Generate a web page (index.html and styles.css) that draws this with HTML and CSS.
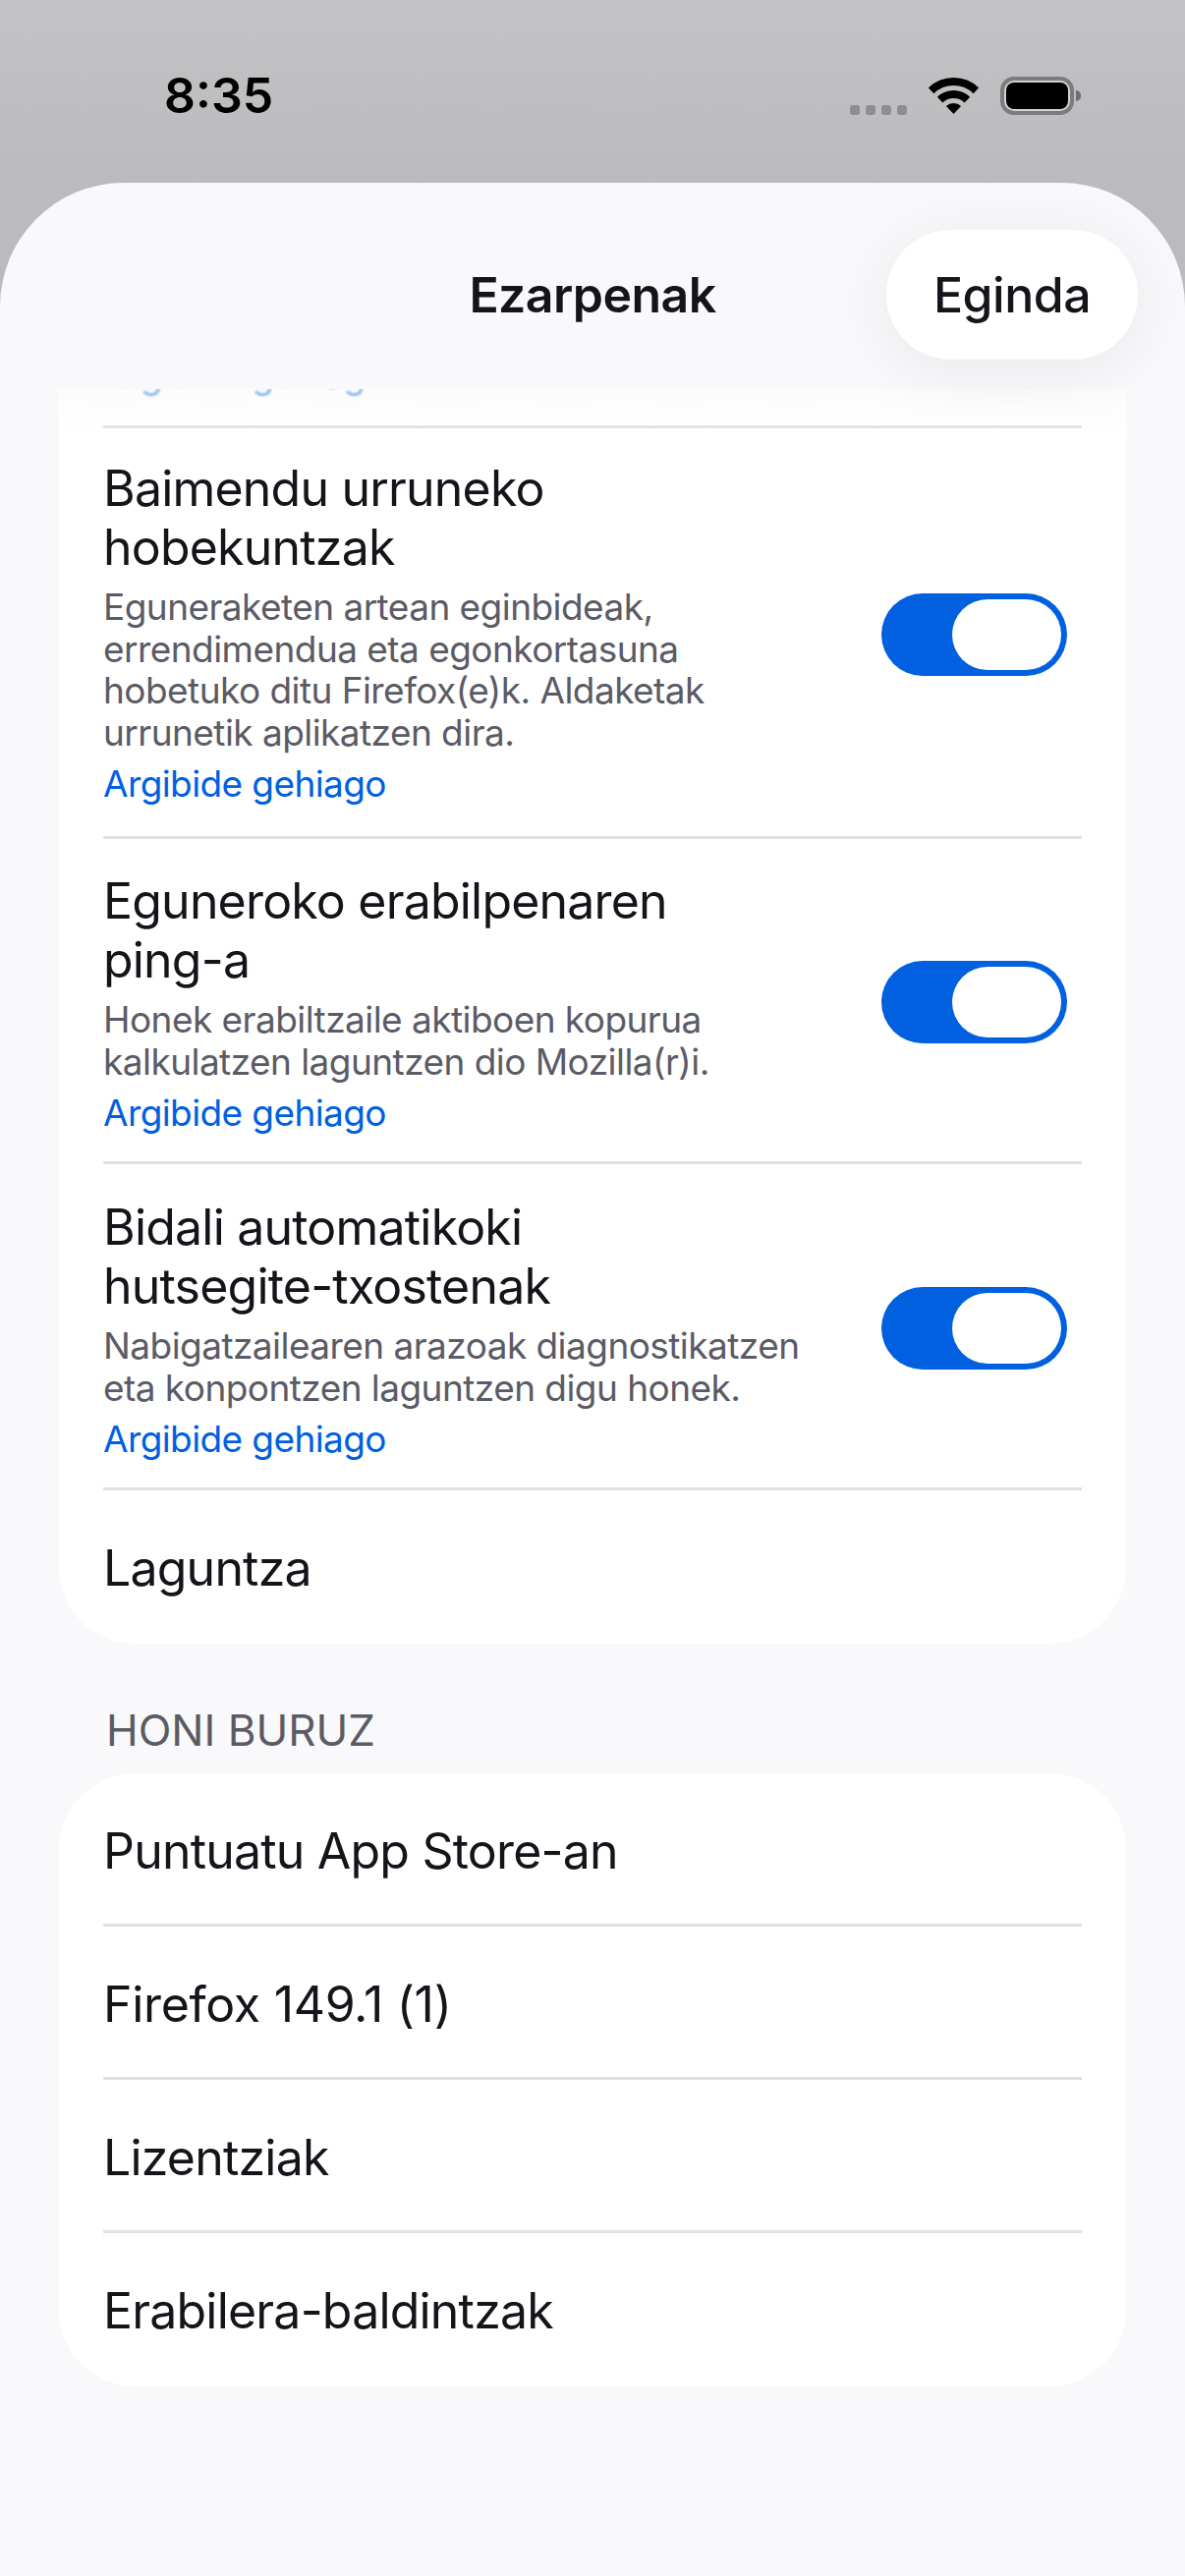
FILE: index.html
```html
<!DOCTYPE html>
<html lang="eu">
  <head>
    <meta charset="UTF-8" />
    <meta name="viewport" content="width=device-width, initial-scale=1.0" />
    <title>Ezarpenak</title>
    <link rel="stylesheet" href="styles.css">
  </head>
  <body>
    <!-- Status bar -->
    <div class="status">
      <span class="time">8:35</span>
      <div class="status-icons">
        <div class="signal"><i></i><i></i><i></i><i></i></div>
        <svg class="wifi" width="51" height="37" viewBox="0 0 51 37">
          <path d="M2.6 13.3A33 33 0 0 1 48.4 13.3" fill="none" stroke="#000" stroke-width="8" />
          <path d="M11.6 22.6A20 20 0 0 1 39.4 22.6" fill="none" stroke="#000" stroke-width="8" />
          <path d="M25.5 37L17.9 29.1A11 11 0 0 1 33.1 29.1Z" fill="#000" />
        </svg>
        <div class="battery"><div class="battery-fill"></div></div>
        <div class="battery-cap"></div>
      </div>
    </div>

    <!-- Settings sheet -->
    <div class="sheet">
      <div class="sheet-header">
        <span></span>
        <h1 class="sheet-title">Ezarpenak</h1>
        <button class="done">Eginda</button>
      </div>

      <div class="scroll">
        <div class="fade"></div>
        <div class="card card-scrolled">
          <div class="row row-cut">
            <div class="row-text"><a class="more more-blur">Argibide gehiago</a></div>
          </div>
          <div class="row">
            <div class="row-text">
              <div class="row-title">Baimendu urruneko<br>hobekuntzak</div>
              <div class="row-desc">Eguneraketen artean eginbideak,<br>errendimendua eta egonkortasuna<br>hobetuko ditu Firefox(e)k. Aldaketak<br>urrunetik aplikatzen dira.</div>
              <a class="more">Argibide gehiago</a>
            </div>
            <div class="toggle"><div class="thumb"></div></div>
          </div>
          <div class="row row-short">
            <div class="row-text">
              <div class="row-title">Eguneroko erabilpenaren<br>ping-a</div>
              <div class="row-desc">Honek erabiltzaile aktiboen kopurua<br>kalkulatzen laguntzen dio Mozilla(r)i.</div>
              <a class="more">Argibide gehiago</a>
            </div>
            <div class="toggle"><div class="thumb"></div></div>
          </div>
          <div class="row row-short">
            <div class="row-text">
              <div class="row-title">Bidali automatikoki<br>hutsegite-txostenak</div>
              <div class="row-desc">Nabigatzailearen arazoak diagnostikatzen<br>eta konpontzen laguntzen digu honek.</div>
              <a class="more">Argibide gehiago</a>
            </div>
            <div class="toggle"><div class="thumb"></div></div>
          </div>
          <div class="row row-plain row-title">Laguntza</div>
        </div>

        <div class="section-label">HONI BURUZ</div>
        <div class="card">
          <div class="row row-plain row-title">Puntuatu App Store-an</div>
          <div class="row row-plain row-title row-version">Firefox 149.1 (1)</div>
          <div class="row row-plain row-title">Lizentziak</div>
          <div class="row row-plain row-title">Erabilera-baldintzak</div>
        </div>
      </div>
    </div>
  </body>
</html>
```

FILE: styles.css
```css
* {
  box-sizing: border-box;
}
body {
  margin: 0;
  width: 1206px;
  height: 2622px;
  overflow: hidden;
  font-family: Inter, "Liberation Sans", sans-serif;
  color: #15141a;
  background: linear-gradient(#c3c3c5, #bbbbbd 186px);
}

/* Status bar */
.status {
  height: 186px;
  padding: 78px 106px 0 167px;
  display: flex;
  justify-content: space-between;
  align-items: flex-start;
}
.time {
  font-size: 50px;
  font-weight: 600;
  line-height: 39px;
  color: #000;
}
.status-icons {
  display: flex;
  align-items: center;
  height: 39px;
}
.signal {
  display: flex;
  gap: 6px;
  margin: 28px 22px 0 0;
}
.signal i {
  width: 10px;
  height: 10px;
  border-radius: 3px;
  background: #8e8e90;
}
.wifi {
  margin-right: 22px;
}
.battery {
  width: 75px;
  height: 39px;
  padding: 2px;
  border: 4px solid #7c7c7e;
  border-radius: 14px;
  background: #d3d3d5;
}
.battery-fill {
  height: 100%;
  border-radius: 8px;
  background: #000;
}
.battery-cap {
  width: 5px;
  height: 11px;
  margin-left: 2px;
  border-radius: 0 5px 5px 0;
  background: #6f6f71;
}

/* Sheet */
.sheet {
  height: 2436px;
  overflow: hidden;
  border-radius: 126px 126px 0 0;
  background: #f9f9fb;
}
.sheet-header {
  height: 210px;
  padding: 48px 48px 30px;
  display: grid;
  grid-template-columns: 1fr auto 1fr;
  align-items: center;
}
.sheet-title {
  margin: 0;
  font-size: 50px;
  font-weight: 600;
  line-height: 60px;
  letter-spacing: -0.55px;
}
.done {
  justify-self: end;
  width: 256px;
  height: 132px;
  border: none;
  border-radius: 66px;
  background: #fff;
  box-shadow: 0 10px 70px rgba(0, 0, 0, 0.07);
  font-family: inherit;
  font-size: 50px;
  font-weight: 500;
  letter-spacing: -0.5px;
  color: #15141a;
  position: relative;
  z-index: 2;
}

/* Scrolling list */
.scroll {
  position: relative;
  height: 2226px;
  overflow: hidden;
}
.fade {
  position: absolute;
  top: 0;
  left: 0;
  right: 0;
  height: 50px;
  background: linear-gradient(rgba(249, 249, 251, 0.5), rgba(249, 249, 251, 0));
  z-index: 1;
}
.card {
  margin: 0 60px;
  padding: 0 45px;
  background: #fff;
  border-radius: 78px;
}
.card-scrolled {
  margin-top: -38px;
  border-radius: 0 0 78px 78px;
}
.row {
  display: flex;
  justify-content: space-between;
  align-items: center;
  padding: 31px 15px 28.5px 0;
  border-bottom: 3px solid #e0e0e6;
}
.row:last-child {
  border-bottom: none;
}
.row-cut {
  padding-top: 0;
  padding-bottom: 27px;
}
.row-short {
  padding-top: 33.5px;
  padding-bottom: 25.25px;
}
.row-short .toggle {
  margin-top: -4px;
}
.row-plain {
  display: block;
  padding: 49px 0 44px;
}
.row-plain:last-child {
  padding-bottom: 47px;
}
.row-text {
  white-space: nowrap;
}
.row-title {
  font-size: 50px;
  line-height: 60px;
  letter-spacing: -0.8px;
}
.row-version {
  letter-spacing: -0.3px;
}
.row-desc {
  margin-top: 10px;
  font-size: 37px;
  line-height: 42.7px;
  letter-spacing: -0.55px;
  color: #5b5b66;
}
.more {
  display: block;
  margin-top: 6.5px;
  font-size: 37px;
  line-height: 48px;
  letter-spacing: -0.6px;
  color: #0060df;
}
.more-blur {
  margin-top: 0;
  opacity: 0.8;
  filter: blur(1px);
}
.toggle {
  width: 189px;
  height: 84px;
  margin-top: 2px;
  padding: 6px;
  display: flex;
  justify-content: flex-end;
  border-radius: 42px;
  background: #0060df;
}
.thumb {
  width: 111px;
  height: 72px;
  border-radius: 36px;
  background: #fff;
}
.section-label {
  margin: 58px 0 14px 108px;
  font-size: 44px;
  line-height: 60px;
  color: #5b5b66;
}
```
